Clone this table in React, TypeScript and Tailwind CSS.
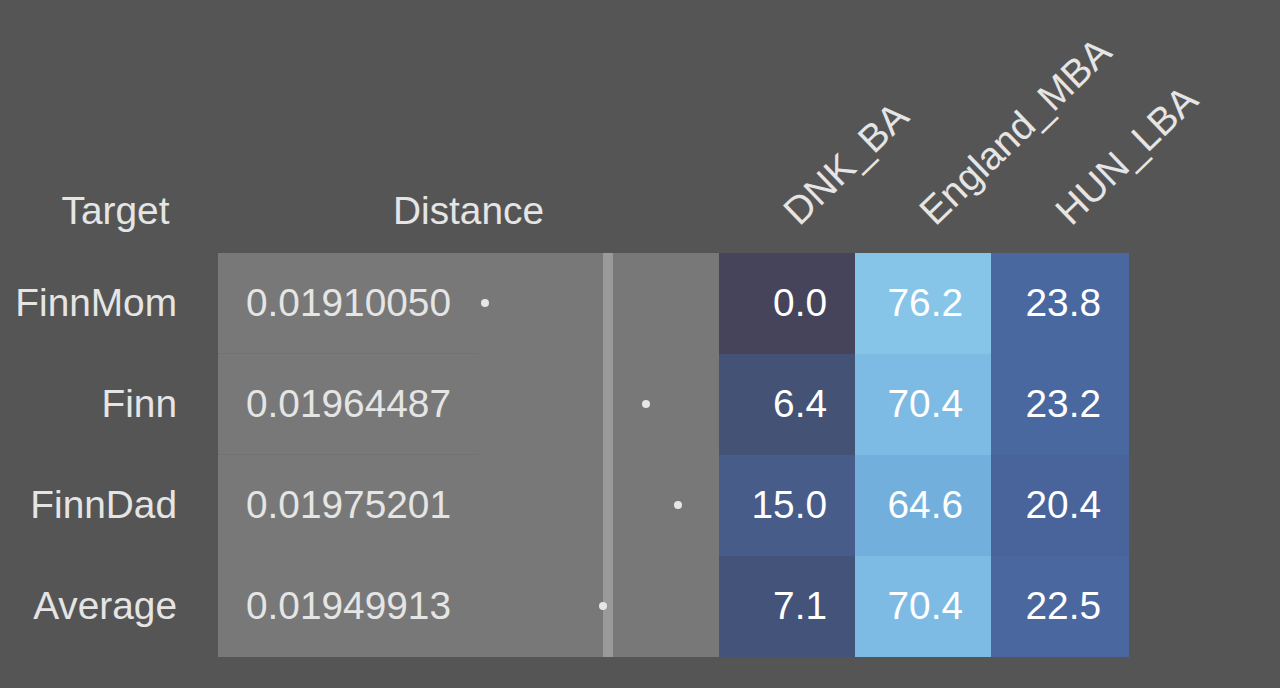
import React from 'react';

type Row = {
  name: string;
  distance: string;
  dotX: number;
  cells: { value: string; color: string }[];
};

const rows: Row[] = [
  {
    name: 'FinnMom',
    distance: '0.01910050',
    dotX: 7,
    cells: [
      { value: '0.0', color: 'bg-[#45445a]' },
      { value: '76.2', color: 'bg-[#86c5e8]' },
      { value: '23.8', color: 'bg-[#4a68a0]' },
    ],
  },
  {
    name: 'Finn',
    distance: '0.01964487',
    dotX: 168,
    cells: [
      { value: '6.4', color: 'bg-[#445276]' },
      { value: '70.4', color: 'bg-[#7dbbe4]' },
      { value: '23.2', color: 'bg-[#4a68a0]' },
    ],
  },
  {
    name: 'FinnDad',
    distance: '0.01975201',
    dotX: 200,
    cells: [
      { value: '15.0', color: 'bg-[#475c88]' },
      { value: '64.6', color: 'bg-[#72afdc]' },
      { value: '20.4', color: 'bg-[#49649b]' },
    ],
  },
  {
    name: 'Average',
    distance: '0.01949913',
    dotX: 125,
    cells: [
      { value: '7.1', color: 'bg-[#44537a]' },
      { value: '70.4', color: 'bg-[#7dbbe4]' },
      { value: '22.5', color: 'bg-[#4a67a0]' },
    ],
  },
];

const columns = ['DNK_BA', 'England_MBA', 'HUN_LBA'];
const colWidths = ['w-[136px]', 'w-[136px]', 'w-[138px]'];

const ROW_H = 101;

const DistanceChart: React.FC = () => (
  <svg width={241} height={ROW_H * rows.length} className="block">
    <rect x={125} y={0} width={10} height={ROW_H * rows.length} fill="#9a9a9a" />
    {rows.map((r, i) => (
      <circle key={r.name} cx={r.dotX} cy={i * ROW_H + 50} r={4} fill="#e6e6e6" />
    ))}
  </svg>
);

export default function App() {
  return (
    <div className="h-[688px] w-full overflow-hidden bg-[#555555] font-['Liberation_Sans',Arial,sans-serif] text-[38.8px] leading-none text-[#e5e5e5]">
      {/* header */}
      <div className="flex h-[253px] items-end">
        <div className="w-[218px] pb-[22px] pl-[13px] text-center">Target</div>
        <div className="w-[501px] pb-[22px] text-center">Distance</div>
        {columns.map((c, i) => (
          <div key={c} className={`relative h-full ${colWidths[i]}`}>
            <span className="absolute bottom-[21px] left-[85px] origin-bottom-left -rotate-[44deg] whitespace-nowrap">
              {c}
            </span>
          </div>
        ))}
      </div>

      {/* body */}
      <div className="flex">
        <div className="flex w-[218px] flex-col">
          {rows.map((r) => (
            <div key={r.name} className="flex h-[101px] items-center justify-end pr-[41px]">
              {r.name}
            </div>
          ))}
        </div>

        <div className="flex w-[501px] bg-[#787878]">
          <div className="flex w-[260px] flex-col">
            {rows.map((r, i) => (
              <div
                key={r.name}
                className={`flex h-[101px] items-center pl-[28px] ${i < 2 ? 'border-b border-[#727272]' : ''}`}
              >
                {r.distance}
              </div>
            ))}
          </div>
          <DistanceChart />
        </div>

        <div className="flex flex-col">
          {rows.map((r) => (
            <div key={r.name} className="flex h-[101px]">
              {r.cells.map((cell, j) => (
                <div
                  key={j}
                  className={`flex items-center justify-end pr-[28px] text-white ${colWidths[j]} ${cell.color}`}
                >
                  {cell.value}
                </div>
              ))}
            </div>
          ))}
        </div>
      </div>
    </div>
  );
}
